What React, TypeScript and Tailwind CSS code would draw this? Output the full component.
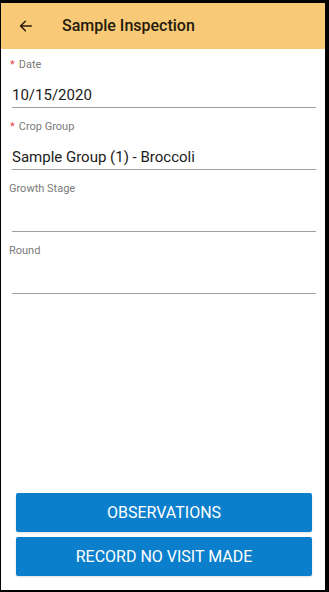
import React from "react";

const Field: React.FC<{ label: string; value?: string; required?: boolean }> = ({ label, value, required }) => {
  return (
    <div className="flex flex-col">
      <div className="flex items-center h-[14px] text-[11px] text-[#7a7a7a] leading-none">
        {required && <span className="text-[#e5484d] mr-[4px] pl-[1px]">*</span>}
        <span>{label}</span>
      </div>
      <div className="ml-[3px] mr-[9px] h-[24px] mt-[13px] border-b border-[#9e9e9e] flex items-center text-[15px] text-[#1b1b1b] leading-none">
        {value}
      </div>
    </div>
  );
};

const App: React.FC = () => {
  return (
    <div className="w-[329px] h-[592px] bg-black pt-[3px] pl-[1px] pr-[4px] pb-[2px]" style={{ fontFamily: "Roboto, 'Liberation Sans', sans-serif" }}>
      <div className="h-full bg-white flex flex-col">
        {/* header */}
        <div className="h-[46px] bg-[#f8c976] flex items-center shrink-0">
          <svg className="ml-[17px]" width="16" height="16" viewBox="0 0 24 24" fill="none" stroke="#2a1d0a" strokeWidth="2.2" strokeLinecap="round" strokeLinejoin="round">
            <path d="M20 12H4" />
            <path d="M11 5l-7 7 7 7" />
          </svg>
          <span className="ml-[28px] text-[16px] font-medium text-[#241a0c]">Sample Inspection</span>
        </div>

        {/* form */}
        <div className="flex flex-col gap-[11px] pl-[8px] pt-[8px]">
          <Field label="Date" value="10/15/2020" required />
          <Field label="Crop Group" value="Sample Group (1) - Broccoli" required />
          <Field label="Growth Stage" />
          <Field label="Round" />
        </div>

        <div className="flex-1" />

        {/* actions */}
        <div className="flex flex-col gap-[5px] pl-[15px] pr-[13px] pb-[14px]">
          <button className="h-[39px] bg-[#0b7fcb] rounded-[2px] text-white text-[16px] shadow-sm">OBSERVATIONS</button>
          <button className="h-[39px] bg-[#0b7fcb] rounded-[2px] text-white text-[16px] shadow-sm">RECORD NO VISIT MADE</button>
        </div>
      </div>
    </div>
  );
};

export default App;
